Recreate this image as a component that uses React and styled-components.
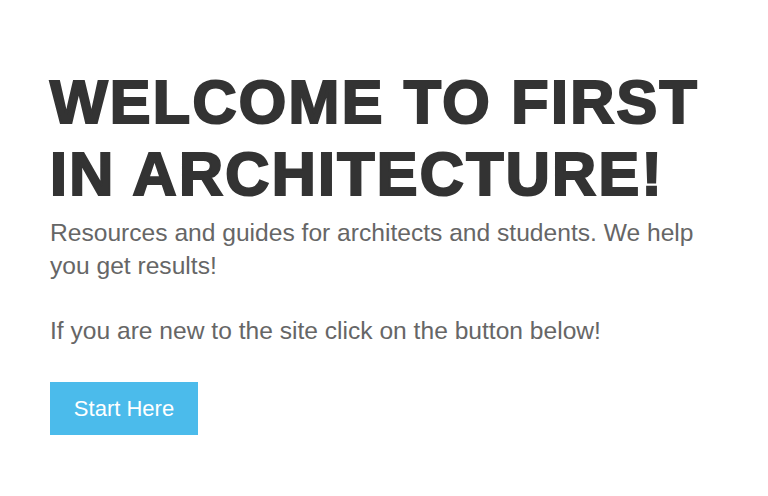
import React from 'react';
import styled, { createGlobalStyle } from 'styled-components';

const GlobalStyle = createGlobalStyle`
  html, body {
    margin: 0;
    padding: 0;
    background: #ffffff;
  }
`;

const Hero = styled.section`
  box-sizing: border-box;
  width: 768px;
  height: 496px;
  padding: 66px 50px 0;
  font-family: 'Liberation Sans', Arial, sans-serif;
`;

const Title = styled.h1`
  margin: 0;
  font-size: 61px;
  line-height: 72px;
  font-weight: 700;
  letter-spacing: 2.3px;
  color: #333333;
  -webkit-text-stroke: 2.2px #333333;
  text-transform: uppercase;
`;

const Text = styled.p`
  margin: ${props => props.top || 0}px 0 0;
  font-size: 24.6px;
  line-height: 33px;
  color: #666666;
`;

const Button = styled.a`
  display: inline-flex;
  align-items: center;
  justify-content: center;
  margin-top: 35px;
  width: 148px;
  height: 53px;
  background: #4bbbeb;
  color: #ffffff;
  font-size: 22px;
  text-decoration: none;
`;

const App = () => (
  <>
    <GlobalStyle />
    <Hero>
      <Title>Welcome to First in Architecture!</Title>
      <Text top={6}>
        Resources and guides for architects and students. We help you get results!
      </Text>
      <Text top={32}>If you are new to the site click on the button below!</Text>
      <Button href="#">Start Here</Button>
    </Hero>
  </>
);

export default App;
